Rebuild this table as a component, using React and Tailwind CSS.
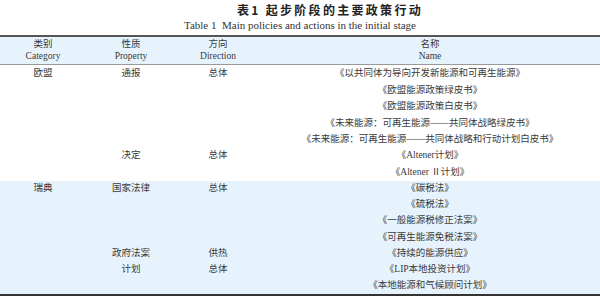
import React from "react";

const eu = [
  ["欧盟", "通报", "总体", "《以共同体为导向开发新能源和可再生能源》"],
  ["", "", "", "《欧盟能源政策绿皮书》"],
  ["", "", "", "《欧盟能源政策白皮书》"],
  ["", "", "", "《未来能源：可再生能源——共同体战略绿皮书》"],
  ["", "", "", "《未来能源：可再生能源——共同体战略和行动计划白皮书》"],
  ["", "决定", "总体", "《Altener计划》"],
  ["", "", "", "《Altener Ⅱ计划》"],
];

const se = [
  ["瑞典", "国家法律", "总体", "《碳税法》"],
  ["", "", "", "《硫税法》"],
  ["", "", "", "《一般能源税修正法案》"],
  ["", "", "", "《可再生能源免税法案》"],
  ["", "政府法案", "供热", "《持续的能源供应》"],
  ["", "计划", "总体", "《LIP本地投资计划》"],
  ["", "", "", "《本地能源和气候顾问计划》"],
];

function Row({ r, h }) {
  return (
    <div className={`grid grid-cols-[86px_90px_84px_1fr] ${h} items-center text-center leading-none`}>
      {r.map((c, i) => (
        <div key={i} className="whitespace-nowrap">{c}</div>
      ))}
    </div>
  );
}

export default function App() {
  return (
    <div
      className="w-[600px] h-[297px] bg-white text-[#3a3a3a] text-[9.5px] overflow-hidden"
      style={{ fontFamily: '"Liberation Serif", "Noto Sans CJK SC", serif' }}
    >
      <div className="h-[16px] flex items-end justify-start pl-[237px]">
        <div
          className="font-bold text-[12px] leading-none tracking-[2.3px] text-[#222]"
          style={{ fontFamily: '"Noto Sans CJK SC", sans-serif' }}
        >
          表1&nbsp;起步阶段的主要政策行动
        </div>
      </div>
      <div className="h-[19px] flex items-center justify-center text-[11px] leading-none text-[#333]">
        Table 1&nbsp;&nbsp;Main policies and actions in the initial stage
      </div>
      <div className="h-[2px] bg-[#555]" />
      <div className="bg-[#e7f3fc] h-[28px] grid grid-cols-[86px_90px_84px_1fr] text-center leading-none border-b border-[#999]">
        {[
          ["类别", "Category"],
          ["性质", "Property"],
          ["方向", "Direction"],
          ["名称", "Name"],
        ].map(([a, b], i) => (
          <div key={i} className="flex flex-col items-center justify-center gap-[2px]">
            <div>{a}</div>
            <div>{b}</div>
          </div>
        ))}
      </div>
      <div className="pt-[1px]">
        {eu.map((r, i) => (
          <Row key={i} r={r} h="h-[16.4px]" />
        ))}
      </div>
      <div className="bg-[#e7f3fc]">
        {se.map((r, i) => (
          <Row key={i} r={r} h="h-[16.2px]" />
        ))}
      </div>
      <div className="h-[2px] bg-[#333]" />
    </div>
  );
}
